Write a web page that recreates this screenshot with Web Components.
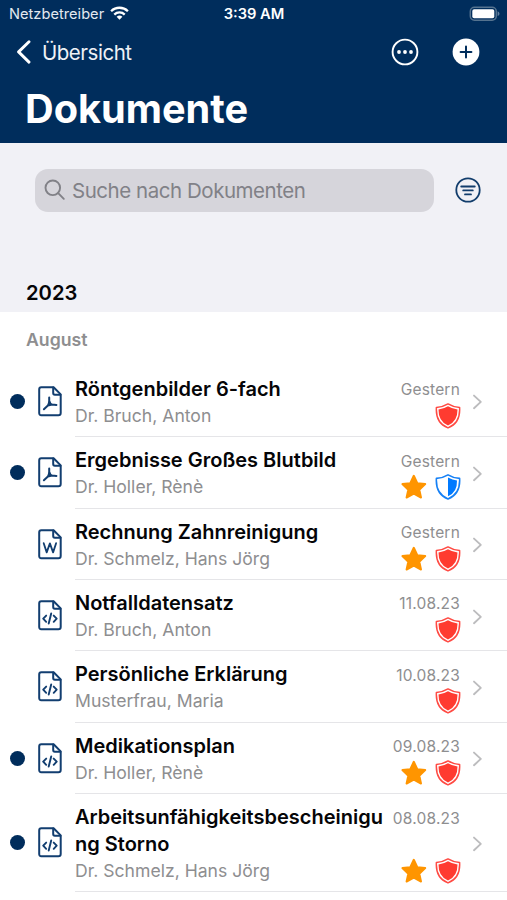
<!DOCTYPE html>
<html lang="de">
<head>
<meta charset="UTF-8">
<meta name="viewport" content="width=device-width, initial-scale=1">
<title>Dokumente</title>
<style>
    :root {
        --navy: #002d5c;
        --gray: #8e8e90;
        --surface: #f1f1f6;
    }

    body {
        margin: 0;
        overflow: hidden;
        background: #fff;
        color: #050507;
        font-family: Inter, "Liberation Sans", sans-serif;
    }
</style>
</head>
<body>
<documents-page>
    <status-bar slot="header" data-carrier="Netzbetreiber" data-time="3:39 AM"></status-bar>
    <nav-header slot="header" data-back="Übersicht">Dokumente</nav-header>
    <search-field slot="tools" data-placeholder="Suche nach Dokumenten"></search-field>
    <span slot="year">2023</span>
    <span slot="month">August</span>
    <document-row data-type="pdf" data-date="Gestern" data-shield="full" data-unread>
        Röntgenbilder 6-fach<span slot="author">Dr. Bruch, Anton</span>
    </document-row>
    <document-row data-type="pdf" data-date="Gestern" data-shield="half" data-star data-unread>
        Ergebnisse Großes Blutbild<span slot="author">Dr. Holler, Rènè</span>
    </document-row>
    <document-row data-type="word" data-date="Gestern" data-shield="full" data-star>
        Rechnung Zahnreinigung<span slot="author">Dr. Schmelz, Hans Jörg</span>
    </document-row>
    <document-row data-type="code" data-date="11.08.23" data-shield="full">
        Notfalldatensatz<span slot="author">Dr. Bruch, Anton</span>
    </document-row>
    <document-row data-type="code" data-date="10.08.23" data-shield="full">
        Persönliche Erklärung<span slot="author">Musterfrau, Maria</span>
    </document-row>
    <document-row data-type="code" data-date="09.08.23" data-shield="full" data-star data-unread>
        Medikationsplan<span slot="author">Dr. Holler, Rènè</span>
    </document-row>
    <document-row data-type="code" data-date="08.08.23" data-shield="full" data-star data-unread>
        Arbeitsunfähigkeitsbescheinigung Storno<span slot="author">Dr. Schmelz, Hans Jörg</span>
    </document-row>
</documents-page>

<script>
const ICONS = {
    wifi: `<svg width="19" height="14" viewBox="0 0 19 14" fill="#fff">
        <path d="M9.5 13.7 6.6 10.8a4.2 4.2 0 0 1 5.8 0z"/>
        <g fill="none" stroke="#fff" stroke-width="2.3">
            <path d="M4.3 8.6a7.4 7.4 0 0 1 10.4 0"/>
            <path d="M1.1 5.2a12 12 0 0 1 16.8 0"/>
        </g>
    </svg>`,
    battery: `<svg width="32" height="16" viewBox="0 0 32 16">
        <rect x="1.3" y="1.2" width="26" height="13" rx="4.2" fill="none" stroke="#55738f" stroke-width="1.5"/>
        <rect x="3.3" y="3.2" width="22" height="9" rx="1.8" fill="#fff"/>
        <path d="M28.6 5.3v4.8q1.9-.7 1.9-2.4t-1.9-2.4z" fill="#627f9f"/>
    </svg>`,
    back: `<svg width="16" height="24" viewBox="0 0 16 24" fill="none" stroke="#fff" stroke-width="2.9" stroke-linecap="round" stroke-linejoin="round">
        <path d="M13 1.8 2.6 11.9 13 22.1"/>
    </svg>`,
    more: `<svg width="28" height="28" viewBox="0 0 28 28" fill="#fff">
        <circle cx="14" cy="14" r="12.4" fill="none" stroke="#fff" stroke-width="1.9"/>
        <circle cx="8" cy="14" r="1.9"/><circle cx="14" cy="14" r="1.9"/><circle cx="20" cy="14" r="1.9"/>
    </svg>`,
    add: `<svg width="28" height="28" viewBox="0 0 28 28">
        <circle cx="14" cy="14" r="13.4" fill="#fff"/>
        <path d="M14 8.6v10.8M8.6 14h10.8" stroke="#002d5c" stroke-width="2" stroke-linecap="round"/>
    </svg>`,
    search: `<svg width="22" height="22" viewBox="0 0 22 22" fill="none" stroke="#818187" stroke-width="1.9" stroke-linecap="round">
        <circle cx="8.8" cy="8.8" r="7.3"/><path d="m14.2 14.2 5.6 5.6"/>
    </svg>`,
    filter: `<svg width="26" height="26" viewBox="0 0 26 26" fill="none" stroke="#123d6c" stroke-width="1.8" stroke-linecap="round">
        <circle cx="13" cy="13" r="11.7"/>
        <path d="M6.2 9.5h13.6M8.2 13.4h9.6M10 17.4h6"/>
    </svg>`,
    star: `<svg width="26" height="26" viewBox="0 0 26 26" fill="#ff9500" stroke="#ff9500" stroke-width="2" stroke-linejoin="round">
        <path d="m12.8 1.8 3.5 7.4 7.9.9-5.9 5.7 1.7 7.7-7.2-3.8-7.2 3.8 1.7-7.7-5.9-5.7 7.9-.9z"/>
    </svg>`,
    shieldfull: `<svg width="26" height="26" viewBox="0 0 26 26">
        <path d="M13 .9Q18.8 4.4 24.6 4.4 25.6 20 13 24.9.4 20 1.4 4.4 7.2 4.4 13 .9z" fill="none" stroke="#ff4a43" stroke-width="1.5" stroke-linejoin="round"/>
        <path d="M13 3.3Q17.6 6.1 22.5 6.5 22.7 18.4 13 22.5 3.3 18.4 3.5 6.5 8.4 6.1 13 3.3z" fill="#ff3b30"/>
    </svg>`,
    shieldhalf: `<svg width="26" height="26" viewBox="0 0 26 26">
        <path d="M13 .9Q18.8 4.4 24.6 4.4 25.6 20 13 24.9.4 20 1.4 4.4 7.2 4.4 13 .9z" fill="none" stroke="#1680f5" stroke-width="1.6" stroke-linejoin="round"/>
        <path d="M13 3.6Q17.6 6.1 22 6.5 22.4 18.4 13 22.3z" fill="#007aff"/>
    </svg>`,
    chevron: `<svg width="11" height="16" viewBox="0 0 11 16" fill="none" stroke="#bcbcbe" stroke-width="1.9" stroke-linecap="round" stroke-linejoin="round">
        <path d="m2 1.6 6.8 6.3L2 14.2"/>
    </svg>`
};

// symbol printed on the sheet, by document type
const SYMBOLS = {
    pdf: `<path d="M11.2 11.4v3.4q0 2.6-1.3 4.7L5.9 23.3M11.2 14.8q.8 3 2.8 3.8l4.4.4M9.9 19.5l4.1-.9" stroke-width="2"/><path d="M11.4 15.6l2.6 3.2-4.2.9z" stroke="none" fill="#123e70" fill-opacity=".35"/>`,
    word: `<path d="m5.7 14.2 3 9.2 3.2-9 3.2 9 3-9.2" stroke-width="1.8"/>`,
    code: `<path d="m8.2 15.6-3 3.1 3 3.1M15.7 15.6l3 3.1-3 3.1M13.2 13.4l-2.5 10.2" stroke-width="1.9"/>`
};

class StatusBar extends HTMLElement {
    constructor() {
        super();
        this.attachShadow({ mode: 'open' });
    }

    connectedCallback() {
        this.shadowRoot.innerHTML = `
            <style>
                :host {
                    display: grid;
                    grid-template-columns: 1fr auto 1fr;
                    align-items: center;
                    height: 28px;
                    padding: 0 6px 0 9px;
                    color: #fff;
                }

                svg { display: block; }

                .carrier {
                    display: flex;
                    align-items: center;
                    gap: 6px;
                    font-size: 14.6px;
                    letter-spacing: 0.03px;
                    color: #e3e9f0;
                }

                .carrier svg { margin-top: -2px; }

                .time {
                    font-size: 14.7px;
                    font-weight: 600;
                    margin-left: -2px;
                }

                .battery {
                    justify-self: end;
                    margin-top: -1px;
                }
            </style>
            <div class="carrier"><span>${this.dataset.carrier}</span>${ICONS.wifi}</div>
            <div class="time">${this.dataset.time}</div>
            <div class="battery">${ICONS.battery}</div>
        `;
    }
}

class NavHeader extends HTMLElement {
    constructor() {
        super();
        this.attachShadow({ mode: 'open' });
    }

    connectedCallback() {
        this.shadowRoot.innerHTML = `
            <style>
                :host {
                    display: block;
                    color: #fff;
                }

                svg { display: block; }

                .bar {
                    display: flex;
                    align-items: center;
                    height: 48px;
                    padding: 0 27px 0 16px;
                }

                .back {
                    margin: 1px auto 0 10px;
                    font-size: 20.5px;
                    letter-spacing: -0.47px;
                    line-height: 28px;
                    color: #eef2f6;
                }

                .add { margin-left: 33px; }

                h1 {
                    margin: 0;
                    padding: 8px 25px 0;
                    font-size: 39.7px;
                    line-height: 50px;
                    font-weight: 700;
                }
            </style>
            <div class="bar">
                ${ICONS.back}
                <span class="back">${this.dataset.back}</span>
                ${ICONS.more}
                <span class="add">${ICONS.add}</span>
            </div>
            <h1><slot></slot></h1>
        `;
    }
}

class SearchField extends HTMLElement {
    constructor() {
        super();
        this.attachShadow({ mode: 'open' });
    }

    connectedCallback() {
        this.shadowRoot.innerHTML = `
            <style>
                :host {
                    display: flex;
                    align-items: center;
                    gap: 21px;
                    padding: 26px 26px 0 35px;
                }

                svg { display: block; }

                .field {
                    flex: 1;
                    display: flex;
                    align-items: center;
                    gap: 6px;
                    height: 43.6px;
                    box-sizing: border-box;
                    padding: 0 9px;
                    border-radius: 13px;
                    background: #d6d5db;
                    color: #818187;
                    font-size: 20.5px;
                    letter-spacing: -0.46px;
                }
            </style>
            <div class="field">${ICONS.search}<span>${this.dataset.placeholder}</span></div>
            ${ICONS.filter}
        `;
    }
}

class DocumentRow extends HTMLElement {
    constructor() {
        super();
        this.attachShadow({ mode: 'open' });
    }

    getStyles() {
        return `
            <style>
                :host {
                    display: grid;
                    grid-template-columns: 16px 24px 1fr;
                    align-items: center;
                    padding-left: 10px;
                }

                svg { display: block; }

                .dot {
                    width: 15px;
                    height: 15px;
                    border-radius: 50%;
                }

                :host([data-unread]) .dot { background: var(--navy); }

                .file { margin-left: 11.5px; }

                .content {
                    display: flex;
                    min-height: 71.35px;
                    box-sizing: border-box;
                    margin-left: 25px;
                    padding: 10.2px 24px 8.3px 0;
                    border-bottom: 1px solid #e5e5e8;
                }

                .text {
                    flex: 1;
                    min-width: 0;
                }

                .title {
                    font-size: 20px;
                    line-height: 26.8px;
                    font-weight: 600;
                    overflow-wrap: anywhere;
                }

                .author {
                    font-size: 17.6px;
                    line-height: 24px;
                    padding-top: 1px;
                    color: var(--gray);
                }

                .meta {
                    display: flex;
                    flex-direction: column;
                    justify-content: space-between;
                    align-items: flex-end;
                    margin: 1.4px 0 -1.2px 8px;
                    font-size: 15.5px;
                    line-height: 25.5px;
                    letter-spacing: 0.2px;
                    color: var(--gray);
                    white-space: nowrap;
                }

                .badges {
                    display: flex;
                    gap: 8px;
                    margin-right: -1px;
                }

                .chevron {
                    align-self: center;
                    margin: 1px 0 0 12px;
                }
            </style>
        `;
    }

    render() {
        const { type, date, shield, star } = this.dataset;
        this.shadowRoot.innerHTML = `
            ${this.getStyles()}
            <span class="dot"></span>
            <svg class="file" width="24" height="31" viewBox="0 0 24 31" fill="none" stroke="#123e70" stroke-width="2" stroke-linecap="round" stroke-linejoin="round">
                <path d="M3.3 1.3H15.6L22.7 8.4V26.9q0 2.3-2.3 2.3H3.3Q1.2 29.2 1.2 26.9V3.6q0-2.3 2.1-2.3z"/>
                <path d="M15.2 1.6v5.5q0 1.6 1.6 1.6h5.6"/>
                ${SYMBOLS[type]}
            </svg>
            <div class="content">
                <div class="text">
                    <div class="title"><slot></slot></div>
                    <div class="author"><slot name="author"></slot></div>
                </div>
                <div class="meta">
                    <span>${date}</span>
                    <span class="badges">${star !== undefined ? ICONS.star : ''}${ICONS['shield' + shield]}</span>
                </div>
                <span class="chevron">${ICONS.chevron}</span>
            </div>
        `;
    }

    connectedCallback() {
        this.render();
    }
}

class DocumentsPage extends HTMLElement {
    constructor() {
        super();
        this.attachShadow({ mode: 'open' });
    }

    connectedCallback() {
        this.shadowRoot.innerHTML = `
            <style>
                :host {
                    display: block;
                    width: 507px;
                    height: 900px;
                    overflow: hidden;
                }

                header {
                    height: 142.6px;
                    background: var(--navy);
                }

                .tools {
                    display: flex;
                    flex-direction: column;
                    justify-content: space-between;
                    height: 169.4px;
                    background: var(--surface);
                }

                h2 {
                    margin: 0;
                    padding: 0 26px 5px;
                    font-size: 20.2px;
                    line-height: 28px;
                    font-weight: 600;
                }

                h3 {
                    margin: 0;
                    height: 53.9px;
                    box-sizing: border-box;
                    padding: 14px 26px 0;
                    font-size: 17.7px;
                    line-height: 27px;
                    font-weight: 600;
                    color: #8e8e90;
                }
            </style>
            <header><slot name="header"></slot></header>
            <section class="tools">
                <slot name="tools"></slot>
                <h2><slot name="year"></slot></h2>
            </section>
            <h3><slot name="month"></slot></h3>
            <main><slot></slot></main>
        `;
    }
}

customElements.define('status-bar', StatusBar);
customElements.define('nav-header', NavHeader);
customElements.define('search-field', SearchField);
customElements.define('document-row', DocumentRow);
customElements.define('documents-page', DocumentsPage);
</script>
</body>
</html>
